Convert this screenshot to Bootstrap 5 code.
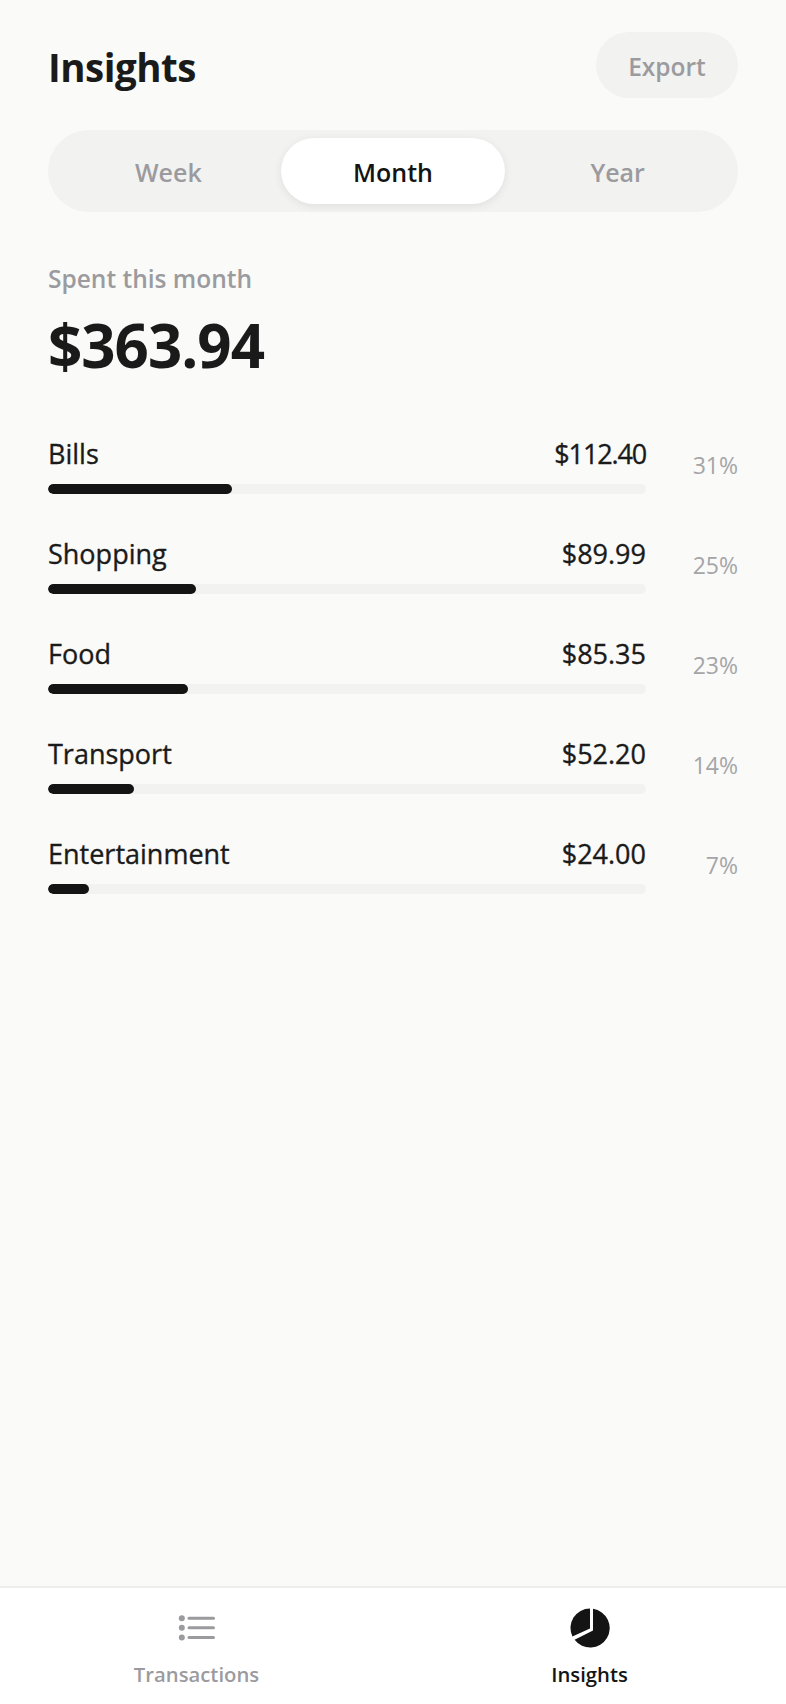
<!DOCTYPE html>
<html lang="en">
<head>
<meta charset="utf-8">
<title>Insights</title>
<link href="https://cdn.jsdelivr.net/npm/bootstrap@5.3.0/dist/css/bootstrap.min.css" rel="stylesheet">
<style>
html,body{height:100%}
body{background:#fafaf8;color:#1a1a1a;font-family:"Open Sans","Noto Sans","Liberation Sans",sans-serif;overflow:hidden}
.app-shell{height:1704px}
.page-main{padding:32px 48px 0}
.page-title{font-size:38.5px;font-weight:700;line-height:62px;margin:0;letter-spacing:-.5px;padding-top:4px}
.export-btn{background:#f2f2f0;color:#9b9b9f;border:0;height:66px;width:142px;font-size:24.5px;font-weight:600;padding:4px 0 0}
.seg-track{background:#f2f2f0;padding:8px;margin-top:32px;height:82px}
.seg-item{flex:1 1 0;border:0;background:transparent;color:#9b9b9f;font-size:25px;font-weight:600;padding:4px 0 0}
.seg-item.is-on{background:#fff;color:#141414;box-shadow:0 2px 8px rgba(0,0,0,.08)}
.spent-label{color:#9b9b9f;font-size:24.5px;font-weight:600;margin-top:50px;line-height:34px}
.spent-total{font-size:60px;font-weight:700;line-height:76px;margin-top:10.5px;letter-spacing:-1px}
.cat-list{margin-top:53.5px}
.cat-row{height:100px}
.cat-body{width:598px}
.cat-name,.cat-amt{font-size:27px;font-weight:500;line-height:36px;-webkit-text-stroke:.35px currentColor}
.cat-amt-tight{letter-spacing:-1.15px}
.bar-track{background:#f2f2f0;height:10px;border-radius:5px;margin-top:12px;overflow:hidden}
.bar-fill{background:#141414;height:100%;border-radius:5px}
.cat-pct{color:#a5a5a8;font-size:23px;line-height:32px;margin-top:13px}
.tabbar{background:#fff;border-top:2px solid #eeeeec;height:118px}
.tab-item{flex:1 1 0;padding-top:16px;font-size:20.3px;font-weight:600;color:#9b9b9f;line-height:30px}
.tab-item.is-on{color:#141414}
.tab-icon{height:48px;width:48px;display:block;margin-bottom:7px}
</style>
</head>
<body>
<div class="app-shell d-flex flex-column">
  <main class="page-main flex-grow-1">
    <div class="d-flex justify-content-between align-items-center">
      <h1 class="page-title">Insights</h1>
      <button class="export-btn rounded-pill" type="button">Export</button>
    </div>
    <div class="seg-track rounded-pill d-flex">
      <button class="seg-item rounded-pill" type="button">Week</button>
      <button class="seg-item rounded-pill is-on" type="button">Month</button>
      <button class="seg-item rounded-pill" type="button">Year</button>
    </div>
    <div class="spent-label">Spent this month</div>
    <div class="spent-total">$363.94</div>
    <div class="cat-list">
      <div class="cat-row d-flex justify-content-between">
        <div class="cat-body">
          <div class="d-flex justify-content-between"><span class="cat-name">Bills</span><span class="cat-amt cat-amt-tight">$112.40</span></div>
          <div class="bar-track"><div class="bar-fill" style="width:30.7%"></div></div>
        </div>
        <div class="cat-pct">31%</div>
      </div>
      <div class="cat-row d-flex justify-content-between">
        <div class="cat-body">
          <div class="d-flex justify-content-between"><span class="cat-name">Shopping</span><span class="cat-amt">$89.99</span></div>
          <div class="bar-track"><div class="bar-fill" style="width:24.73%"></div></div>
        </div>
        <div class="cat-pct">25%</div>
      </div>
      <div class="cat-row d-flex justify-content-between">
        <div class="cat-body">
          <div class="d-flex justify-content-between"><span class="cat-name">Food</span><span class="cat-amt">$85.35</span></div>
          <div class="bar-track"><div class="bar-fill" style="width:23.45%"></div></div>
        </div>
        <div class="cat-pct">23%</div>
      </div>
      <div class="cat-row d-flex justify-content-between">
        <div class="cat-body">
          <div class="d-flex justify-content-between"><span class="cat-name">Transport</span><span class="cat-amt">$52.20</span></div>
          <div class="bar-track"><div class="bar-fill" style="width:14.34%"></div></div>
        </div>
        <div class="cat-pct">14%</div>
      </div>
      <div class="cat-row d-flex justify-content-between">
        <div class="cat-body">
          <div class="d-flex justify-content-between"><span class="cat-name">Entertainment</span><span class="cat-amt">$24.00</span></div>
          <div class="bar-track"><div class="bar-fill" style="width:6.8%"></div></div>
        </div>
        <div class="cat-pct">7%</div>
      </div>
    </div>
  </main>
  <nav class="tabbar d-flex">
    <div class="tab-item d-flex flex-column align-items-center">
      <svg class="tab-icon" viewBox="0 0 48 48" fill="none" stroke="#9b9b9f" stroke-width="3" stroke-linecap="round">
        <line x1="16" y1="14.2" x2="40.5" y2="14.2"/><line x1="16" y1="23.8" x2="40.5" y2="23.8"/><line x1="16" y1="33.5" x2="40.5" y2="33.5"/>
        <circle cx="8.8" cy="14.2" r="3" fill="#9b9b9f" stroke="none"/><circle cx="8.8" cy="23.8" r="3" fill="#9b9b9f" stroke="none"/><circle cx="8.8" cy="33.5" r="3" fill="#9b9b9f" stroke="none"/>
      </svg>
      <span>Transactions</span>
    </div>
    <div class="tab-item is-on d-flex flex-column align-items-center">
      <svg class="tab-icon" viewBox="0 0 48 48" fill="#141414">
        <path d="M24 4.5V24.5L6.4 32.4A19.5 19.5 0 0 1 24 4.5Z"/>
        <path d="M27 4.8A19.5 19.5 0 1 1 8.6 35.8L27 26.6Z"/>
      </svg>
      <span>Insights</span>
    </div>
  </nav>
</div>
<script src="https://cdn.jsdelivr.net/npm/bootstrap@5.3.0/dist/js/bootstrap.bundle.min.js"></script>
</body>
</html>
